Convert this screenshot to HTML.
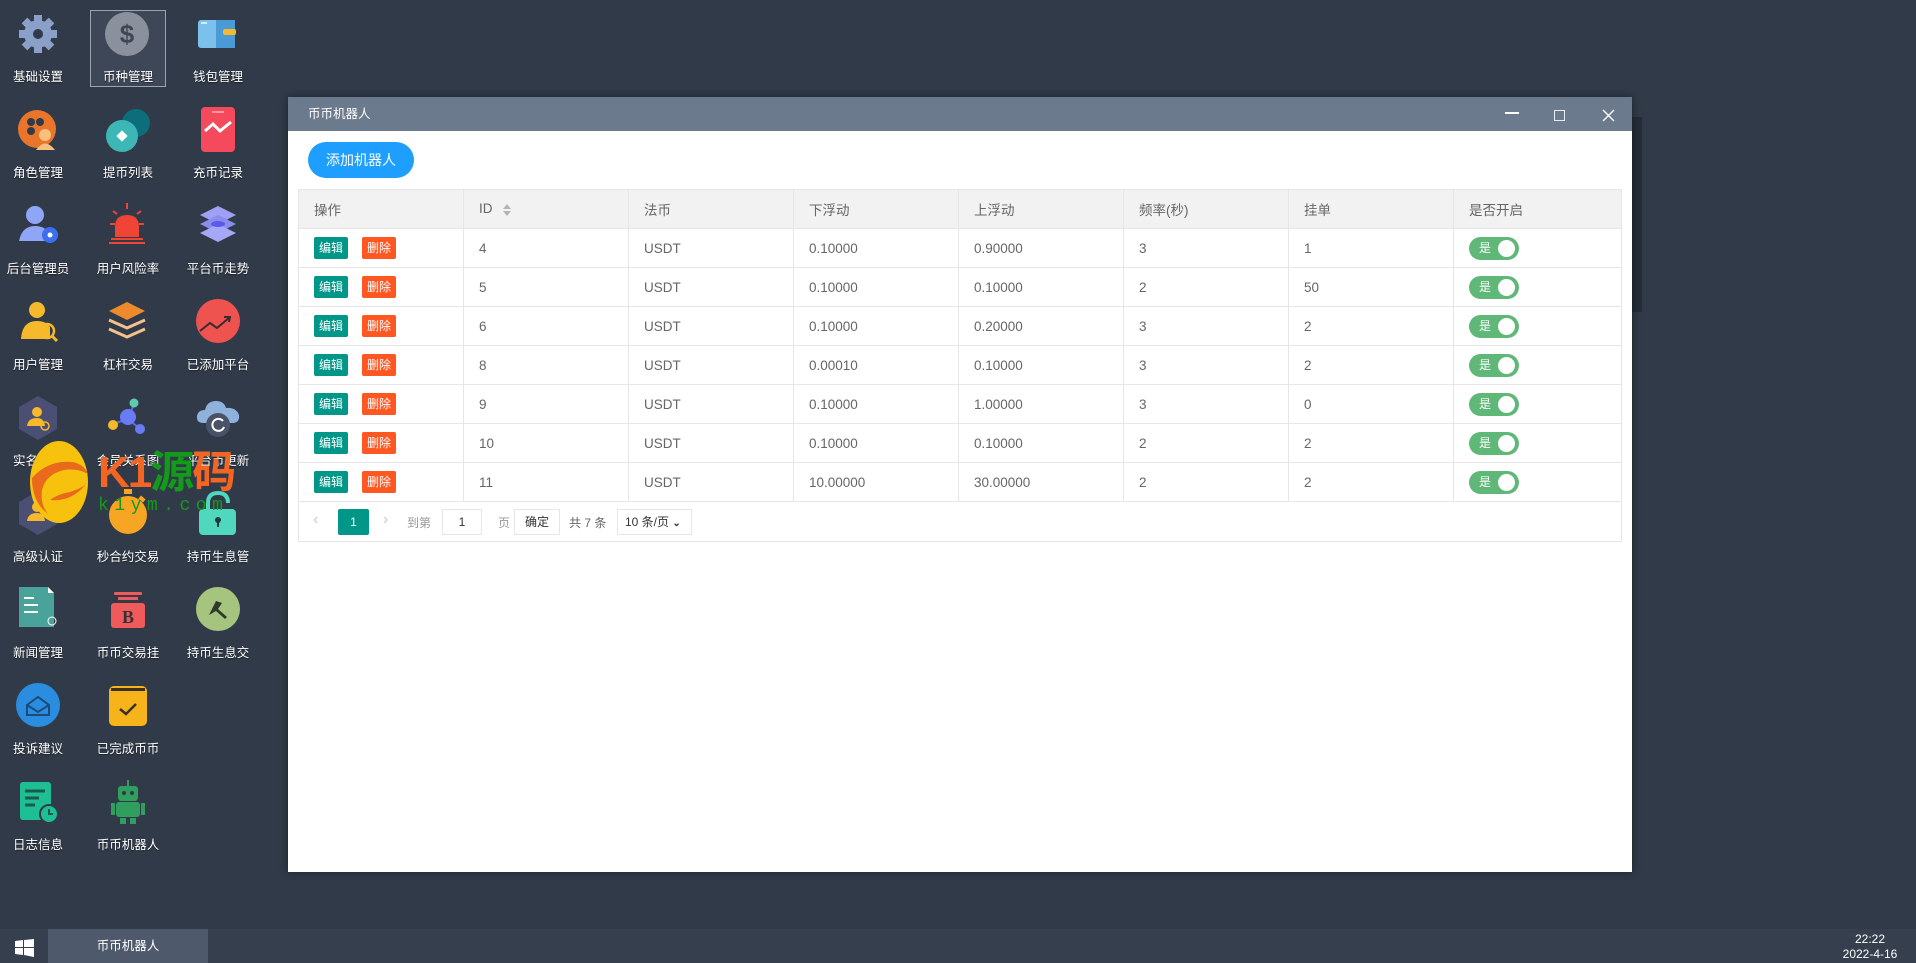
<!DOCTYPE html>
<html><head><meta charset="utf-8"><style>
*{margin:0;padding:0;box-sizing:border-box}
body{width:1916px;height:963px;overflow:hidden;background:#303a48;font-family:"Liberation Sans","Noto Sans CJK SC",sans-serif;position:relative}
.lbl{position:absolute;width:110px;text-align:center;color:#fff;font-size:12.5px;text-shadow:0 1px 1px rgba(0,0,0,.5)}
.win{position:absolute;left:288px;top:97px;width:1344px;height:775px;background:#fff;box-shadow:0 0 8px rgba(0,0,0,.4)}
.tb{height:34px;background:#6b7a8c;color:#fff;font-size:12.5px;line-height:34px;padding-left:20px;position:relative}
table{border-collapse:collapse;position:absolute;left:10px;top:92px;width:1324px;font-size:13.5px;color:#666}
td,th{border:1px solid #e6e6e6;height:39px;padding:0 15px;text-align:left;font-weight:normal;white-space:nowrap}
th{background:#f2f2f2}
.b{display:inline-block;height:22px;line-height:22px;width:34px;text-align:center;color:#fff;font-size:12px;border-radius:2px;vertical-align:middle}
.e{background:#009688;margin-right:14px}.d{background:#FF5722}
.sw{display:inline-block;width:50px;height:23px;border-radius:12px;background:#5FB878;position:relative;vertical-align:middle;color:#fff;font-size:12px;line-height:23px;padding-left:10px}
.sw:after{content:"";position:absolute;right:4px;top:3px;width:17px;height:17px;border-radius:50%;background:#fff}
.pg{position:absolute;font-size:12px;color:#999;top:0}
</style></head><body>

<div style="position:absolute;left:90px;top:10px;width:76px;height:77px;border:1px solid #9aa3ae;background:#3e4757"></div>

<svg style="position:absolute;left:16px;top:13px" width="44" height="42" viewBox="0 0 44 42"><g fill="#8aa0c9"><circle cx="22" cy="21" r="14"/><g stroke="#8aa0c9" stroke-width="8"><line x1="22" y1="2" x2="22" y2="40"/><line x1="3" y1="21" x2="41" y2="21"/><line x1="8.5" y1="7.5" x2="35.5" y2="34.5"/><line x1="35.5" y1="7.5" x2="8.5" y2="34.5"/></g></g><circle cx="22" cy="21" r="5" fill="#303a48"/></svg>
<div class="lbl" style="left:-17px;top:66px">基础设置</div>
<svg style="position:absolute;left:105px;top:12px" width="44" height="44"><circle cx="22" cy="22" r="22" fill="#8a909c"/><text x="22" y="31" text-anchor="middle" font-size="26" font-weight="bold" fill="#3e4757" font-family="Liberation Sans">$</text></svg>
<div class="lbl" style="left:73px;top:66px">币种管理</div>
<svg style="position:absolute;left:198px;top:18px" width="42" height="32"><rect x="0" y="2" width="37" height="28" rx="3" fill="#7cc0ee"/><rect x="18" y="2" width="19" height="28" fill="#4a9ad6"/><rect x="25" y="11" width="13" height="6" rx="2" fill="#f5b82e"/><rect x="3" y="4" width="6" height="2" fill="#d6ecfa"/></svg>
<div class="lbl" style="left:163px;top:66px">钱包管理</div>

<svg style="position:absolute;left:18px;top:109px" width="40" height="42"><circle cx="19" cy="20" r="19" fill="#e8752a"/><circle cx="13" cy="13" r="4" fill="#303a48"/><circle cx="22" cy="13" r="4" fill="#303a48"/><circle cx="13" cy="22" r="4" fill="#303a48"/><circle cx="27" cy="26" r="6" fill="#f9c07d"/><path d="M18 41 Q27 28 37 41Z" fill="#f9c07d"/></svg>
<div class="lbl" style="left:-17px;top:162px">角色管理</div>
<svg style="position:absolute;left:105px;top:108px" width="46" height="46"><circle cx="31" cy="15" r="14" fill="#0b6e7a"/><circle cx="17" cy="28" r="16" fill="#3cb7b5"/><rect x="13" y="24" width="8" height="8" fill="#fff" transform="rotate(45 17 28)"/></svg>
<div class="lbl" style="left:73px;top:162px">提币列表</div>
<svg style="position:absolute;left:200px;top:107px" width="36" height="46"><rect x="1" y="0" width="34" height="45" rx="4" fill="#f44a5b"/><rect x="12" y="4" width="12" height="2" fill="#ff9aa4"/><path d="M5 24 L13 17 L20 24 L31 15" stroke="#fff" stroke-width="3" fill="none"/></svg>
<div class="lbl" style="left:163px;top:162px">充币记录</div>

<svg style="position:absolute;left:18px;top:205px" width="42" height="40"><circle cx="17" cy="10" r="9" fill="#8ea6f5"/><path d="M1 36 Q4 21 17 21 Q28 21 32 30 L32 36Z" fill="#8ea6f5"/><circle cx="32" cy="30" r="8" fill="#3b6ff0"/><circle cx="32" cy="30" r="2.5" fill="#fff"/></svg>
<div class="lbl" style="left:-17px;top:258px">后台管理员</div>
<svg style="position:absolute;left:105px;top:203px" width="44" height="44"><path d="M10 34 L10 24 Q10 12 22 12 Q34 12 34 24 L34 34Z" fill="#f04536"/><rect x="6" y="35" width="32" height="2" fill="#f04536"/><rect x="4" y="39" width="36" height="2" fill="#f04536"/><rect x="21" y="0" width="2" height="6" fill="#f04536"/><path d="M5 21h5M34 21h5M8 8l4 3M36 8l-4 3" stroke="#f04536" stroke-width="2"/></svg>
<div class="lbl" style="left:73px;top:258px">用户风险率</div>
<svg style="position:absolute;left:198px;top:205px" width="40" height="40"><path d="M20 1 L38 10 L20 19 L2 10Z" fill="#9f9ff5"/><path d="M20 10 L38 19 L20 28 L2 19Z" fill="#8c8cef"/><path d="M20 19 L38 28 L20 37 L2 28Z" fill="#a7a7f7"/><ellipse cx="20" cy="19" rx="7" ry="3" fill="#5a5ae8"/></svg>
<div class="lbl" style="left:163px;top:258px">平台币走势</div>

<svg style="position:absolute;left:20px;top:301px" width="38" height="42"><circle cx="17" cy="9" r="8" fill="#f6b92b"/><path d="M1 38 Q2 20 17 20 Q26 20 30 26 L30 38Z" fill="#f6b92b"/><circle cx="27" cy="30" r="7" fill="none" stroke="#f6b92b" stroke-width="2.5"/><line x1="32" y1="35" x2="37" y2="40" stroke="#f6b92b" stroke-width="3"/></svg>
<div class="lbl" style="left:-17px;top:354px">用户管理</div>
<svg style="position:absolute;left:107px;top:301px" width="40" height="40"><path d="M20 1 L38 10 L20 19 L2 10Z" fill="#ec8a2c"/><path d="M2 19 L20 27 L38 19" stroke="#f4c08e" stroke-width="3" fill="none"/><path d="M2 28 L20 36 L38 28" stroke="#f4c08e" stroke-width="3" fill="none"/></svg>
<div class="lbl" style="left:73px;top:354px">杠杆交易</div>
<svg style="position:absolute;left:196px;top:299px" width="44" height="44"><circle cx="22" cy="22" r="22" fill="#ef5350"/><path d="M4 32 L14 24 L21 29 L34 18 M28 18 L34 18 L33 23" stroke="#3e2a2e" stroke-width="2" fill="none"/></svg>
<div class="lbl" style="left:163px;top:354px">已添加平台</div>

<svg style="position:absolute;left:18px;top:395px" width="40" height="46"><path d="M20 1 L39 12 L39 34 L20 45 L1 34 L1 12Z" fill="#4a4f73"/><circle cx="19" cy="17" r="5" fill="#f6b92b"/><path d="M9 31 Q10 23 19 23 Q26 23 27 31Z" fill="#f6b92b"/><circle cx="27" cy="31" r="4" fill="none" stroke="#f6b92b" stroke-width="1.5"/></svg>
<div class="lbl" style="left:-17px;top:450px">实名认证</div>
<svg style="position:absolute;left:108px;top:398px" width="40" height="40"><path d="M20 21 L26 6 M20 21 L5 26 M20 21 L31 30" stroke="#5a6ef0" stroke-width="2"/><circle cx="26" cy="5" r="4.5" fill="#5ecbb0"/><circle cx="20" cy="19" r="8" fill="#6a7cf5"/><circle cx="5" cy="27" r="5" fill="#f6b92b"/><circle cx="32" cy="31" r="5" fill="#6a7cf5"/></svg>
<div class="lbl" style="left:73px;top:450px">会员关系图</div>
<svg style="position:absolute;left:196px;top:397px" width="46" height="46"><path d="M8 26 Q0 26 1 19 Q2 13 9 13 Q11 4 20 4 Q28 4 30 11 Q40 10 43 18 Q44 26 36 26Z" fill="#8fb2dd"/><circle cx="22" cy="28" r="12" fill="#4a5268"/><path d="M27 24 A6 6 0 1 0 28 30" stroke="#fff" stroke-width="2" fill="none"/></svg>
<div class="lbl" style="left:163px;top:450px">平台币更新</div>

<svg style="position:absolute;left:18px;top:490px" width="40" height="46"><path d="M20 1 L39 12 L39 34 L20 45 L1 34 L1 12Z" fill="#4a4f73"/><circle cx="19" cy="17" r="5" fill="#f6b92b"/><path d="M9 31 Q10 23 19 23 Q26 23 27 31Z" fill="#f6b92b"/></svg>
<div class="lbl" style="left:-17px;top:546px">高级认证</div>
<svg style="position:absolute;left:108px;top:489px" width="40" height="46"><rect x="16" y="0" width="8" height="5" fill="#f6a623"/><rect x="31" y="8" width="6" height="4" fill="#f6a623" transform="rotate(40 34 10)"/><circle cx="20" cy="26" r="19" fill="#f6a623"/></svg>
<div class="lbl" style="left:73px;top:546px">秒合约交易</div>
<svg style="position:absolute;left:198px;top:489px" width="40" height="48"><path d="M10 22 V14 Q10 4 20 4 Q30 4 30 14" stroke="#4fd8bd" stroke-width="4" fill="none"/><rect x="1" y="20" width="37" height="26" rx="4" fill="#4fd8bd"/><circle cx="20" cy="31" r="3" fill="#1e3a3a"/><rect x="19" y="31" width="2" height="7" fill="#1e3a3a"/></svg>
<div class="lbl" style="left:163px;top:546px">持币生息管</div>

<svg style="position:absolute;left:16px;top:587px" width="44" height="44"><path d="M3 0 H32 L38 6 V40 H3Z" fill="#4aa39b"/><path d="M32 0 V6 H38" fill="#fff"/><path d="M8 11h10M8 18h14M8 25h14" stroke="#fff" stroke-width="2"/><circle cx="36" cy="34" r="4" fill="none" stroke="#fff" stroke-width="1"/></svg>
<div class="lbl" style="left:-17px;top:642px">新闻管理</div>
<svg style="position:absolute;left:110px;top:590px" width="36" height="40"><rect x="4" y="2" width="28" height="3" rx="1" fill="#f05a5a"/><rect x="8" y="7" width="20" height="3" fill="#f05a5a"/><rect x="1" y="13" width="34" height="25" rx="3" fill="#f05a5a"/><text x="18" y="33" text-anchor="middle" font-size="18" font-weight="bold" fill="#333" font-family="Liberation Serif">B</text></svg>
<div class="lbl" style="left:73px;top:642px">币币交易挂</div>
<svg style="position:absolute;left:196px;top:587px" width="44" height="46"><circle cx="22" cy="22" r="22" fill="#a5c47e"/><path d="M13 28 L20 14 L26 16 L22 22 L31 30 L29 32 L20 24Z" fill="#2e3a2a"/></svg>
<div class="lbl" style="left:163px;top:642px">持币生息交</div>

<svg style="position:absolute;left:16px;top:683px" width="44" height="44"><circle cx="22" cy="22" r="22" fill="#2a8de0"/><path d="M11 22 L22 14 L33 22 V32 H11Z M11 22 L22 29 L33 22" stroke="#1c4a7a" stroke-width="2" fill="none"/></svg>
<div class="lbl" style="left:-17px;top:738px">投诉建议</div>
<svg style="position:absolute;left:108px;top:685px" width="40" height="42"><rect x="1" y="1" width="38" height="40" rx="5" fill="#f6b31b"/><rect x="3" y="3" width="34" height="3" fill="#3a3020"/><path d="M12 24 L18 29 L28 19" stroke="#3a3020" stroke-width="2.5" fill="none"/></svg>
<div class="lbl" style="left:73px;top:738px">已完成币币</div>

<svg style="position:absolute;left:20px;top:782px" width="40" height="42"><rect x="0" y="0" width="31" height="38" rx="3" fill="#1fbf95"/><path d="M5 9h20M5 16h14M5 23h10" stroke="#1b5a4a" stroke-width="3"/><circle cx="29" cy="32" r="9" fill="#1fbf95" stroke="#303a48" stroke-width="2"/><path d="M29 27 V32 H33" stroke="#1b5a4a" stroke-width="2" fill="none"/></svg>
<div class="lbl" style="left:-17px;top:834px">日志信息</div>
<svg style="position:absolute;left:111px;top:780px" width="34" height="46"><rect x="16" y="0" width="2" height="6" fill="#2f9e5e"/><rect x="7" y="6" width="20" height="15" rx="3" fill="#2f9e5e"/><rect x="5" y="22" width="24" height="15" rx="3" fill="#2f9e5e"/><rect x="0" y="23" width="4" height="12" fill="#2f9e5e"/><rect x="30" y="23" width="4" height="12" fill="#2f9e5e"/><rect x="9" y="38" width="6" height="6" fill="#2f9e5e"/><rect x="19" y="38" width="6" height="6" fill="#2f9e5e"/><circle cx="13" cy="13" r="2" fill="#303a48"/><circle cx="21" cy="13" r="2" fill="#303a48"/></svg>
<div class="lbl" style="left:73px;top:834px">币币机器人</div>

<svg style="position:absolute;left:28px;top:440px" width="64" height="84"><ellipse cx="31" cy="42" rx="29" ry="41" fill="#f7c20e"/><path d="M4 38 Q20 20 44 22 Q56 24 60 34 Q50 28 36 30 Q18 34 14 50 Q12 64 20 74 Q4 62 4 38Z" fill="#e86a1a"/><path d="M58 44 Q44 62 22 60 Q30 54 42 52 Q54 48 58 44Z" fill="#e86a1a"/></svg>
<div style="position:absolute;left:98px;top:440px;font-size:44px;font-weight:bold;line-height:56px;letter-spacing:-2px;white-space:nowrap"><span style="color:#f26522">K1</span><span style="color:#139a1b;font-family:'Noto Sans CJK SC'">源</span><span style="color:#f26522;font-family:'Noto Sans CJK SC'">码</span></div>
<div style="position:absolute;left:98px;top:496px;color:#139a1b;font-size:18px;letter-spacing:5.5px;font-family:'Liberation Mono',monospace">k1ym.com</div>

<div style="position:absolute;left:1631px;top:117px;width:11px;height:195px;background:#252c37"></div>

<div class="win">
 <div class="tb">币币机器人
  <div style="position:absolute;left:1217px;top:15px;width:14px;height:2px;background:#fff"></div>
  <div style="position:absolute;left:1266px;top:13px;width:11px;height:11px;border:1px solid #e8ecf2"></div>
  <svg style="position:absolute;left:1314px;top:12px" width="13" height="13"><path d="M1 1L12 12M12 1L1 12" stroke="#fff" stroke-width="1.4"/></svg>
 </div>
 <div style="position:absolute;left:20px;top:45px;width:106px;height:36px;border-radius:18px;background:#1E9FFF;color:#fff;font-size:14px;line-height:36px;text-align:center">添加机器人</div>
 <table>
  <colgroup><col style="width:165px"><col style="width:165px"><col style="width:165px"><col style="width:165px"><col style="width:165px"><col style="width:165px"><col style="width:165px"><col></colgroup>
  <tr><th>操作</th><th>ID <svg width="10" height="14" style="vertical-align:middle;margin-left:6px"><path d="M1 6L5 1L9 6ZM1 8L5 13L9 8Z" fill="#b4b4b4"/></svg></th><th>法币</th><th>下浮动</th><th>上浮动</th><th>频率(秒)</th><th>挂单</th><th>是否开启</th></tr>
  <tr><td><span class="b e">编辑</span><span class="b d">删除</span></td><td>4</td><td>USDT</td><td>0.10000</td><td>0.90000</td><td>3</td><td>1</td><td><span class="sw">是</span></td></tr>
  <tr><td><span class="b e">编辑</span><span class="b d">删除</span></td><td>5</td><td>USDT</td><td>0.10000</td><td>0.10000</td><td>2</td><td>50</td><td><span class="sw">是</span></td></tr>
  <tr><td><span class="b e">编辑</span><span class="b d">删除</span></td><td>6</td><td>USDT</td><td>0.10000</td><td>0.20000</td><td>3</td><td>2</td><td><span class="sw">是</span></td></tr>
  <tr><td><span class="b e">编辑</span><span class="b d">删除</span></td><td>8</td><td>USDT</td><td>0.00010</td><td>0.10000</td><td>3</td><td>2</td><td><span class="sw">是</span></td></tr>
  <tr><td><span class="b e">编辑</span><span class="b d">删除</span></td><td>9</td><td>USDT</td><td>0.10000</td><td>1.00000</td><td>3</td><td>0</td><td><span class="sw">是</span></td></tr>
  <tr><td><span class="b e">编辑</span><span class="b d">删除</span></td><td>10</td><td>USDT</td><td>0.10000</td><td>0.10000</td><td>2</td><td>2</td><td><span class="sw">是</span></td></tr>
  <tr><td><span class="b e">编辑</span><span class="b d">删除</span></td><td>11</td><td>USDT</td><td>10.00000</td><td>30.00000</td><td>2</td><td>2</td><td><span class="sw">是</span></td></tr>
  <tr><td colspan="8" style="position:relative;height:40px">
   <span class="pg" style="left:14px;top:9px;font-size:16px;color:#ccc">&#8249;</span>
   <span class="pg" style="left:39px;top:7px;width:31px;height:26px;background:#009688;color:#fff;text-align:center;line-height:26px;border-radius:2px">1</span>
   <span class="pg" style="left:84px;top:9px;font-size:16px;color:#ccc">&#8250;</span>
   <span class="pg" style="left:108px;top:12px">到第</span>
   <span class="pg" style="left:143px;top:7px;width:40px;height:26px;border:1px solid #e6e6e6;text-align:center;line-height:24px;color:#333">1</span>
   <span class="pg" style="left:199px;top:12px">页</span>
   <span class="pg" style="left:215px;top:7px;width:46px;height:26px;border:1px solid #e6e6e6;text-align:center;line-height:25px;color:#333">确定</span>
   <span class="pg" style="left:270px;top:12px;color:#666">共 7 条</span>
   <span class="pg" style="left:318px;top:7px;width:75px;height:26px;border:1px solid #e6e6e6;line-height:24px;color:#333;padding-left:7px">10 条/页 <b style="font-size:10px">&#8964;</b></span>
  </td></tr>
 </table>
</div>

<div style="position:absolute;left:0;top:929px;width:1916px;height:34px;background:#363f4d"></div>
<svg style="position:absolute;left:15px;top:939px" width="19" height="18"><path d="M0 2L8 1V8H0ZM9 1L19 0V8H9ZM0 9H8V16L0 15ZM9 9H19V18L9 16Z" fill="#fff"/></svg>
<div style="position:absolute;left:48px;top:929px;width:160px;height:34px;background:#4e5a6c;color:#fff;font-size:12.5px;line-height:34px;text-align:center">币币机器人</div>
<div style="position:absolute;left:1840px;top:932px;width:60px;text-align:center;color:#fff;font-size:12px;line-height:15px">22:22<br>2022-4-16</div>
</body></html>
